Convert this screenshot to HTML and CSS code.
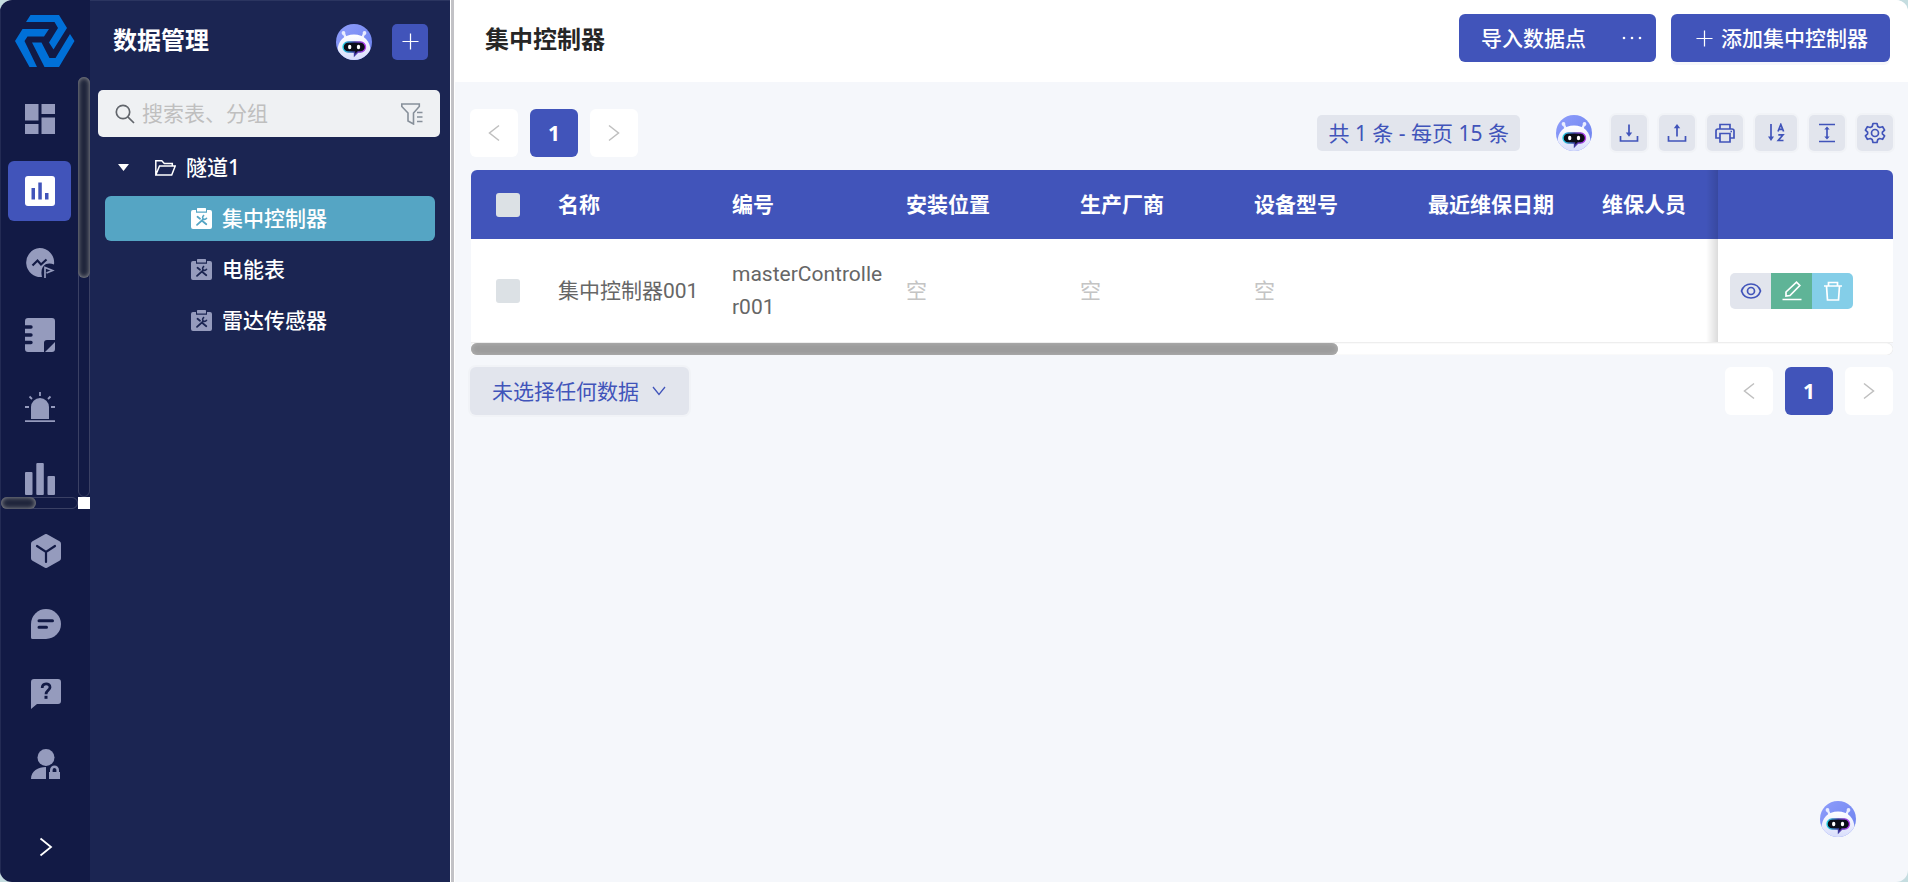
FILE: index.html
```html
<!DOCTYPE html>
<html lang="zh-CN">
<head>
<meta charset="utf-8">
<title>数据管理</title>
<link rel="stylesheet" href="styles.css">
</head>
<body>
<svg class="defs" width="0" height="0" aria-hidden="true">
  <defs>
    <linearGradient id="sky" x1="0" y1="0" x2="1" y2="1"><stop offset="0" stop-color="#8f9efb"/><stop offset="1" stop-color="#6a80ee"/></linearGradient>
    <linearGradient id="body" x1="0" y1="0" x2="0" y2="1"><stop offset="0" stop-color="#ffffff"/><stop offset="1" stop-color="#d3d9fb"/></linearGradient>
    <linearGradient id="glow" x1="0" y1="0" x2="1" y2="0"><stop offset="0" stop-color="#27d3e6"/><stop offset="0.5" stop-color="#3b3a9c"/><stop offset="1" stop-color="#b53df0"/></linearGradient>
    <clipPath id="disc"><circle cx="18" cy="18" r="18"/></clipPath>
  </defs>
  <symbol id="bot" viewBox="0 0 36 36">
    <g clip-path="url(#disc)">
      <rect width="36" height="36" fill="url(#sky)"/>
      <path d="M7.500 9l3 6M28.500 9l-3 6" stroke="#e9edff" stroke-width="2.400" stroke-linecap="round"/>
      <circle cx="7.500" cy="9" r="1.900" fill="#e9edff"/><circle cx="28.500" cy="9" r="1.900" fill="#e9edff"/>
      <path d="M1.500 27C1.500 17 8 10.500 18 10.500S34.500 17 34.500 27c0 7-8 12-16.500 12S1.500 34 1.500 27z" fill="url(#body)"/>
      <path d="M12 18h12.500a5 5 0 0 1 0 10h-2.500l-3.500 3.500V28H12a5 5 0 0 1 0-10z" fill="#0b0d18" stroke="url(#glow)" stroke-width="1.400"/>
      <ellipse cx="13.700" cy="23" rx="1.700" ry="2.200" fill="#fff"/><ellipse cx="22.500" cy="23" rx="1.700" ry="2.200" fill="#fff"/>
    </g>
  </symbol>
  <symbol id="prev" viewBox="0 0 24 24"><path d="M17 4.500L7.500 12l9.500 7.500" fill="none" stroke="currentColor" stroke-width="1.500"/></symbol>
  <symbol id="next" viewBox="0 0 24 24"><path d="M7 4.500l9.500 7.500L7 19.500" fill="none" stroke="currentColor" stroke-width="1.500"/></symbol>
  <symbol id="plus" viewBox="0 0 18 18"><path d="M9 .5v17M.5 9h17" fill="none" stroke="currentColor" stroke-width="1.300"/></symbol>
  <symbol id="clip" viewBox="0 0 21 21">
    <path fill="currentColor" fill-rule="evenodd" d="M2 2h3v2.800h11V2h3a2 2 0 0 1 2 2v15a2 2 0 0 1-2 2H2a2 2 0 0 1-2-2V4a2 2 0 0 1 2-2z"/>
    <rect x="6" width="9" height="3.600" rx=".6" fill="currentColor"/>
    <path class="cut" d="M6.500 8.800l2.500 2M11.700 13.300l3.600 2.900M6 16.800l6-5.300" fill="none" stroke-width="1.800" stroke-linecap="round"/>
    <path class="cut" d="M13.200 7.200c-1.700.8-2 2.400-1.100 3.700 1.300 1 3 .5 3.700-1.200" fill="none" stroke-width="1.600"/>
  </symbol>
</svg>
<div class="app">
  <nav class="rail" aria-label="主导航">
    <svg class="logo" viewBox="0 0 60 52" aria-hidden="true"><g fill="#0070d8"><path d="M15.500 0H44l8 13-13.500 21.500-4.500-7L43 13l-3.500-6H11z"/><path d="M7.500 14H34l-5 7.500H12.500L9.500 26 22 52h-7.500L0 26z"/><path d="M17 27.500h9.500l8 15.500h6L55 19l4.500 7L44 52H29.500z"/></g></svg>
    <div class="rail-scroll">
      <div class="rail-items">
        <button class="rail-btn" aria-label="仪表盘"><svg width="30" height="30" viewBox="0 0 30 30" fill="currentColor"><path d="M0 0h13.500v16.500H0zM16.500 0H30v10H16.500zM0 20h13.500v10H0zM16.500 13.500H30V30H16.500z"/></svg></button>
        <button class="rail-btn rail-btn-on" aria-label="数据管理"><svg width="30" height="30" viewBox="0 0 30 30"><rect width="30" height="30" rx="3" fill="#fff"/><path d="M6.500 12h3.500v11.500H6.500zM13.300 6.500h3.500v17h-3.500zM20 17h3.500v6.500H20z" fill="#4154ba"/></svg></button>
        <button class="rail-btn" aria-label="分析"><svg width="30" height="30" viewBox="0 0 30 30"><path fill="currentColor" d="M14.500 0A14.500 14.500 0 0 1 29 16.500a13 13 0 0 0-8-.5c-4 2-5.500 7-4 13A14.500 14.500 0 1 1 14.500 0z"/><path d="M7.500 17.500l5-5 3.500 4 5.500-5" fill="none" stroke="#121a45" stroke-width="2.200"/><path d="M20 30V19.500l7.500 3-6 2.500" fill="none" stroke="currentColor" stroke-width="1.700"/></svg></button>
        <button class="rail-btn" aria-label="记录"><svg width="30" height="34" viewBox="0 0 30 34"><path fill="currentColor" d="M3 0h24a3 3 0 0 1 3 3v19h-8a3 3 0 0 0-3 3v9H3a3 3 0 0 1-3-3V3a3 3 0 0 1 3-3zM30 24v7a3 3 0 0 1-3 3h-7z"/><path d="M0 9h6M0 17h6M0 24.500h6" stroke="#121a45" stroke-width="3.400" stroke-linecap="round"/></svg></button>
        <button class="rail-btn" aria-label="告警"><svg width="30" height="30" viewBox="0 0 30 30" fill="currentColor"><path d="M6 27V15a9 9 0 0 1 18 0v12zM0 28.200h30V30H0z"/><path d="M15 0v4M4.500 4.500L7 7M25.500 4.500L23 7M0 15h4M26 15h4" fill="none" stroke="currentColor" stroke-width="1.800"/></svg></button>
        <button class="rail-btn" aria-label="统计"><svg width="30" height="32" viewBox="0 0 30 32" fill="currentColor"><rect y="9" width="7.500" height="23" rx="1"/><rect x="11.300" width="7.500" height="32" rx="1"/><rect x="22.500" y="13" width="7.500" height="19" rx="1"/></svg></button>
      </div>
      <div class="track track-v"><div class="thumb"></div></div>
      <div class="track track-h"><div class="thumb"></div></div>
      <div class="corner"></div>
    </div>
    <div class="rail-tools">
      <button class="tool tool-first" aria-label="组件"><svg width="30" height="34" viewBox="0 0 30 34"><path fill="currentColor" d="M13.500.4a3 3 0 0 1 3 0l12 6.800A3 3 0 0 1 30 9.800v14.400a3 3 0 0 1-1.500 2.600l-12 6.800a3 3 0 0 1-3 0l-12-6.800A3 3 0 0 1 0 24.200V9.800a3 3 0 0 1 1.500-2.600z"/><path d="M6 12l9 6 9-6M15 18v10" fill="none" stroke="#121a45" stroke-width="2.200" stroke-linecap="round"/></svg></button>
      <button class="tool" aria-label="消息"><svg width="30" height="30" viewBox="0 0 30 30"><path fill="currentColor" d="M15 0a15 15 0 0 1 0 30H1.500A1.500 1.500 0 0 1 0 28.500V15A15 15 0 0 1 15 0z"/><path d="M8 11.800h13.500M8 18.300h7.500" stroke="#121a45" stroke-width="3" stroke-linecap="round"/></svg></button>
      <button class="tool" aria-label="帮助"><svg width="30" height="30" viewBox="0 0 30 30"><path fill="currentColor" d="M3 0h24a3 3 0 0 1 3 3v19a3 3 0 0 1-3 3H6l-6 5V3a3 3 0 0 1 3-3z"/><path d="M11.200 9c0-5.500 7.800-5.300 7.800-.8 0 3-4 3.300-4 7" fill="none" stroke="#121a45" stroke-width="2.800"/><rect x="13.500" y="16.800" width="3" height="3" fill="#121a45"/></svg></button>
      <button class="tool" aria-label="账户"><svg width="30" height="30" viewBox="0 0 30 30"><circle cx="15" cy="8.500" r="8.500" fill="currentColor"/><path fill="currentColor" d="M0 30c0-8 7-12 15-12v12zM18 23h11v7H18z"/><path d="M20.300 23.500v-2.500a3.200 3.200 0 0 1 6.400 0v2.500" fill="none" stroke="currentColor" stroke-width="2.600"/></svg></button>
      <button class="tool tool-last" aria-label="展开"><svg width="24" height="24" viewBox="0 0 24 24"><path d="M6.500 3.500L17 12 6.500 20.500" fill="none" stroke="#fff" stroke-width="1.800"/></svg></button>
    </div>
  </nav>

  <aside class="side">
    <header class="side-head">
      <h2 class="title">数据管理</h2>
      <svg class="bot"><use href="#bot"/></svg>
      <button class="side-add" aria-label="新增"><svg width="17" height="17"><use href="#plus"/></svg></button>
    </header>
    <label class="search">
      <svg width="20" height="20" viewBox="0 0 20 20" fill="none" stroke="#62666c" stroke-width="1.700"><circle cx="8" cy="8" r="6.700"/><path d="M12.800 12.800L19 19"/></svg>
      <input class="search-input" type="text" placeholder="搜索表、分组" aria-label="搜索表、分组">
      <svg width="22" height="22" viewBox="0 0 22 22" fill="none" stroke="#87909a" stroke-width="1.600"><path d="M.8 1h17.500v2.500L12.500 10v11l-5.500-3v-8L.8 3.500z"/><path d="M16 9.500h5.500M16 14h5.500M16 18.500h5.500"/></svg>
    </label>
    <ul class="tree">
      <li class="node node-root"><svg width="11" height="7" viewBox="0 0 11 7"><path d="M0 0h11L5.500 7z" fill="#fff"/></svg><svg class="folder" width="21" height="16" viewBox="0 0 21 16" fill="none" stroke="#fff" stroke-width="1.500"><path d="M.8 15V.8h6l2.500 2.600h8V6M.8 15L4.500 6h15.700l-3.500 9z"/></svg>隧道1</li>
      <li class="node node-on"><svg width="21" height="21"><use href="#clip"/></svg>集中控制器</li>
      <li class="node"><svg width="21" height="21"><use href="#clip"/></svg>电能表</li>
      <li class="node"><svg width="21" height="21"><use href="#clip"/></svg>雷达传感器</li>
    </ul>
  </aside>
  <div class="splitter"></div>

  <main class="main">
    <header class="head">
      <h1 class="title">集中控制器</h1>
      <div class="split-btn">
        <button class="primary">导入数据点</button><button class="primary primary-more" aria-label="更多"><svg width="20" height="4" viewBox="0 0 20 4" fill="#fff"><circle cx="2" cy="2" r="1.300"/><circle cx="10" cy="2" r="1.300"/><circle cx="18" cy="2" r="1.300"/></svg></button>
      </div>
      <button class="primary primary-add"><svg width="17" height="17"><use href="#plus"/></svg>添加集中控制器</button>
    </header>
    <div class="content">
      <div class="bar">
        <div class="pager">
          <button class="page" aria-label="上一页"><svg width="24" height="24"><use href="#prev"/></svg></button>
          <button class="page page-on">1</button>
          <button class="page" aria-label="下一页"><svg width="24" height="24"><use href="#next"/></svg></button>
        </div>
        <div class="actions">
          <span class="total">共 1 条 - 每页 15 条</span>
          <svg class="bot"><use href="#bot"/></svg>
          <div class="icons">
            <button class="icon" aria-label="下载"><svg width="20" height="20" viewBox="0 0 20 20"><path d="M1.500 13v5h17v-5M10 1.500V11"/><path class="solid" d="M6.800 9.500h6.400L10 13.800z"/></svg></button>
            <button class="icon" aria-label="上传"><svg width="20" height="20" viewBox="0 0 20 20"><path d="M1.500 13v5h17v-5M10 13.500V4"/><path class="solid" d="M6.800 5.300h6.400L10 1z"/></svg></button>
            <button class="icon" aria-label="打印"><svg width="20" height="20" viewBox="0 0 20 20"><path d="M5 6V1.500h10V6M5 15H1V8a2 2 0 0 1 2-2h14a2 2 0 0 1 2 2v7h-4M5 10.500h10v8.500H5zM15.500 8.500h1.500"/></svg></button>
            <button class="icon icon-wide" aria-label="排序"><svg width="20" height="20" viewBox="0 0 20 20"><path d="M5 1v14M12 8.500l2.800-7 2.800 7M13 6.300h3.600M12.300 11.800h4.700l-4.700 5.700h5.200"/><path class="solid" d="M2 13.500h6L5 18z"/></svg></button>
            <button class="icon" aria-label="行高"><svg width="20" height="20" viewBox="0 0 20 20"><path d="M2 1.500h16M2 18.500h16M10 5v10"/><path class="solid" d="M7.300 6.500L10 3.500l2.700 3zM7.300 13.500l2.700 3 2.700-3z"/></svg></button>
            <button class="icon" aria-label="设置"><svg width="22" height="22" viewBox="0 0 22 22"><path d="M9 1.500h4l.8 3 1.800 1 3-.8 2 3.400-2.200 2v1.800l2.200 2-2 3.400-3-.8-1.800 1-.8 3H9l-.8-3-1.800-1-3 .8-2-3.400 2.200-2v-1.800l-2.200-2 2-3.400 3 .8 1.800-1z" stroke-linejoin="round"/><circle cx="11" cy="11" r="3.500"/></svg></button>
          </div>
        </div>
      </div>
      <div class="table-box">
        <table class="grid">
          <colgroup><col class="c-check"><col class="c-data"><col class="c-data"><col class="c-data"><col class="c-data"><col class="c-data"><col class="c-data"><col><col class="c-ops"></colgroup>
          <thead><tr><th class="check"><input class="tick" type="checkbox" aria-label="全选"></th><th>名称</th><th>编号</th><th>安装位置</th><th>生产厂商</th><th>设备型号</th><th>最近维保日期</th><th>维保人员</th><th class="fixed"></th></tr></thead>
          <tbody><tr><td class="check"><input class="tick" type="checkbox" aria-label="选择集中控制器001"></td><td>集中控制器001</td><td>masterController001</td><td class="empty">空</td><td class="empty">空</td><td class="empty">空</td><td></td><td></td><td class="fixed">
            <div class="ops">
              <button class="op op-view" aria-label="查看"><svg width="22" height="18" viewBox="0 0 22 18"><path d="M1.500 9C3 4.500 6.500 2 11 2s8 2.500 9.500 7C19 13.500 15.500 16 11 16S3 13.500 1.500 9z"/><circle cx="11" cy="9" r="3.500"/></svg></button>
              <button class="op op-edit" aria-label="编辑"><svg width="20" height="20" viewBox="0 0 20 20"><path d="M.5 18.500h19M4 15v-4L14.500 1.200l3.300 3.300L8 14.500z"/></svg></button>
              <button class="op op-del" aria-label="删除"><svg width="20" height="20" viewBox="0 0 20 20"><path d="M1 5h18M3.500 5l1 14h11l1-14M5.500 5V1.500h9V5"/></svg></button>
            </div>
          </td></tr></tbody>
        </table>
        <div class="hbar"><div class="hthumb"></div></div>
      </div>
      <div class="foot">
        <button class="picker">未选择任何数据<svg width="14" height="10" viewBox="0 0 14 10"><path d="M1 1l6 7.500L13 1" fill="none" stroke="currentColor" stroke-width="1.300"/></svg></button>
        <div class="pager">
          <button class="page" aria-label="上一页"><svg width="24" height="24"><use href="#prev"/></svg></button>
          <button class="page page-on">1</button>
          <button class="page" aria-label="下一页"><svg width="24" height="24"><use href="#next"/></svg></button>
        </div>
      </div>
    </div>
  </main>
  <button class="float" aria-label="智能助手"><svg class="bot"><use href="#bot"/></svg></button>
</div>
</body>
</html>
```

FILE: styles.css
```css
* { box-sizing: border-box; }
body {
  margin: 0;
  background: #c5dde0;
  font: 21px/33px "Noto Sans", "Noto Sans CJK SC", sans-serif;
  color: #666;
}
button, input { font: inherit; color: inherit; }
button { border: 0; padding: 0; background: none; display: flex; align-items: center; justify-content: center; }
svg { display: block; flex: none; }
.defs { position: absolute; }
.app { display: flex; height: 100vh; border-radius: 12px; overflow: hidden; background: #f5f7fb; }
.title { margin: 0; flex: 1; font-size: 24px; line-height: 36px; font-weight: 700; }
.bot { width: 36px; height: 36px; }

.rail { width: 90px; flex: none; display: flex; flex-direction: column; background: #121a45; color: #959bbd; border-left: 1px solid #232b54; }
.logo { width: 60px; height: 52px; margin: 15px 0 10px 14px; flex: none; }
.rail-scroll { height: 432px; flex: none; display: grid; grid-template-columns: 1fr 12px; grid-template-rows: 1fr 12px; }
.rail-items { display: flex; flex-direction: column; gap: 12px; padding: 12px 7px 0; overflow: hidden; }
.rail-btn { height: 60px; flex: none; border-radius: 6px; }
.rail-btn-on { background: #4154ba; }
.track { border: 1px solid #3a4064; border-radius: 6px; }
.thumb { background: #20263c; border-radius: 6px; box-shadow: inset 0 0 5px #a0a0a0; }
.track-v .thumb { height: 48%; margin: -1px; }
.track-h .thumb { height: 12px; width: 46%; margin: -1px; }
.corner { background: #fff; }
.rail-tools { flex: 1; display: flex; flex-direction: column; padding-top: 4px; }
.tool { height: 70px; flex: none; }
.tool-first { height: 76px; }
.tool-last { margin-top: auto; }

.side { width: 360px; flex: none; background: #1b2552; color: #fff; border-top: 1px solid #2b3560; --cut: #1b2552; }
.side-head { display: flex; align-items: center; gap: 20px; height: 81px; padding: 0 22px 0 23px; }
.side-head .title { padding-bottom: 3px; }
.side-add { width: 36px; height: 36px; border-radius: 5px; background: #4154ba; }
.search { display: flex; align-items: center; gap: 7px; height: 47px; margin: 8px 10px 8px 8px; padding: 0 17px; border-radius: 5px; background: #eff1f3; }
.search-input { flex: 1; min-width: 0; border: 0; padding: 0; background: none; outline: 0; }
.search-input::placeholder { color: #bfbfbf; opacity: 1; }
.tree { list-style: none; margin: 0; padding: 0 15px; display: flex; flex-direction: column; gap: 6px; font-weight: 500; }
.node { display: flex; align-items: center; gap: 10px; height: 45px; padding-left: 86px; border-radius: 6px; }
.node > svg { color: #959bbd; }
.node-root { padding-left: 13px; }
.folder { margin-left: 16px; }
.node-on { background: #55a5c4; --cut: #55a5c4; }
.node-on > svg { color: #fff; }
.cut { stroke: var(--cut); }
.splitter { width: 4px; flex: none; background: #c2c2c6; border-left: 1px solid #fff; }

.main { flex: 1; min-width: 0; border-left: 1px solid #fff; }
.head { display: flex; align-items: center; height: 82px; padding: 0 18px 6px 30px; background: #fff; }
.head .title { color: #262626; padding-top: 2px; }
.split-btn { display: flex; margin-right: 15px; border-radius: 6px; overflow: hidden; }
.primary { height: 48px; padding: 0 22px; background: #4154ba; color: #fff; font-weight: 500; }
.primary-more { width: 48px; padding: 0; }
.primary-add { gap: 8px; padding-left: 25px; border-radius: 6px; box-shadow: 0 3px 0 #f6f7fb; }
.content { padding: 27px 15px 0; }
.bar, .foot { display: flex; align-items: center; justify-content: space-between; }
.pager { display: flex; gap: 12px; }
.page { width: 48px; height: 48px; border-radius: 6px; background: #fff; color: #bfbfbf; }
.page-on { background: #4154ba; color: #fff; font-weight: 700; }
.actions { display: flex; align-items: center; }
.total { height: 36px; padding: 0 11px; margin-right: 36px; border-radius: 5px; background: #e2e5ed; color: #4154ba; line-height: 36px; }
.icons { display: flex; gap: 12px; margin-left: 19px; }
.icon { width: 36px; height: 36px; border-radius: 5px; background: #e2e5ed; box-shadow: 0 0 0 2px #f1f3f7; color: #4154ba; }
.icon-wide { width: 42px; }
.icon svg, .op svg { fill: none; stroke: currentColor; stroke-width: 1.7; }
.icon .solid { fill: currentColor; stroke: none; }

.table-box { margin: 13px 0 12px 1px; }
.grid { width: 100%; table-layout: fixed; border-collapse: separate; border-spacing: 0; background: #fff; border-radius: 6px 6px 0 0; overflow: hidden; }
.c-check { width: 75px; }
.c-data { width: 174px; }
.c-ops { width: 175px; }
.grid th { height: 69px; padding: 0 12px; background: #4154ba; color: #fff; font-weight: 700; text-align: left; white-space: nowrap; }
.grid td { height: 104px; padding: 1px 8px 0 12px; border-bottom: 1px solid #eee; font-family: Roboto, "Noto Sans CJK SC", sans-serif; word-break: break-all; }
.grid .check { padding-left: 25px; }
.tick { display: block; appearance: none; width: 24px; height: 24px; margin: 0; border-radius: 3px; background: #dce1e5; }
.grid .empty { color: #c4c4c4; }
.fixed { position: relative; }
.fixed::before { content: ""; position: absolute; top: 0; bottom: 0; right: 100%; width: 12px; background: linear-gradient(to left, rgba(0,0,0,.14), rgba(0,0,0,0)); }
.ops { display: flex; }
.op { width: 41px; height: 36px; }
.op-view { background: #e2e5ed; color: #4154ba; border-radius: 5px 0 0 5px; }
.op-edit { background: #5fb497; color: #fff; }
.op-del { background: #84cee8; color: #fff; border-radius: 0 5px 5px 0; }
.hbar { height: 12px; border-radius: 0 6px 6px 0; background: #fff; box-shadow: inset 0 0 1px #ccc; }
.hthumb { width: 61%; height: 12px; border-radius: 6px; background: #9c9c9c; box-shadow: inset 0 0 5px #b4b4b4; }
.picker { gap: 13px; height: 48px; padding: 0 23px 0 22px; border-radius: 6px; background: #e2e5ed; color: #4154ba; box-shadow: 0 0 0 2px #f1f3f7; }
.float { position: fixed; right: 52px; bottom: 45px; }
```
